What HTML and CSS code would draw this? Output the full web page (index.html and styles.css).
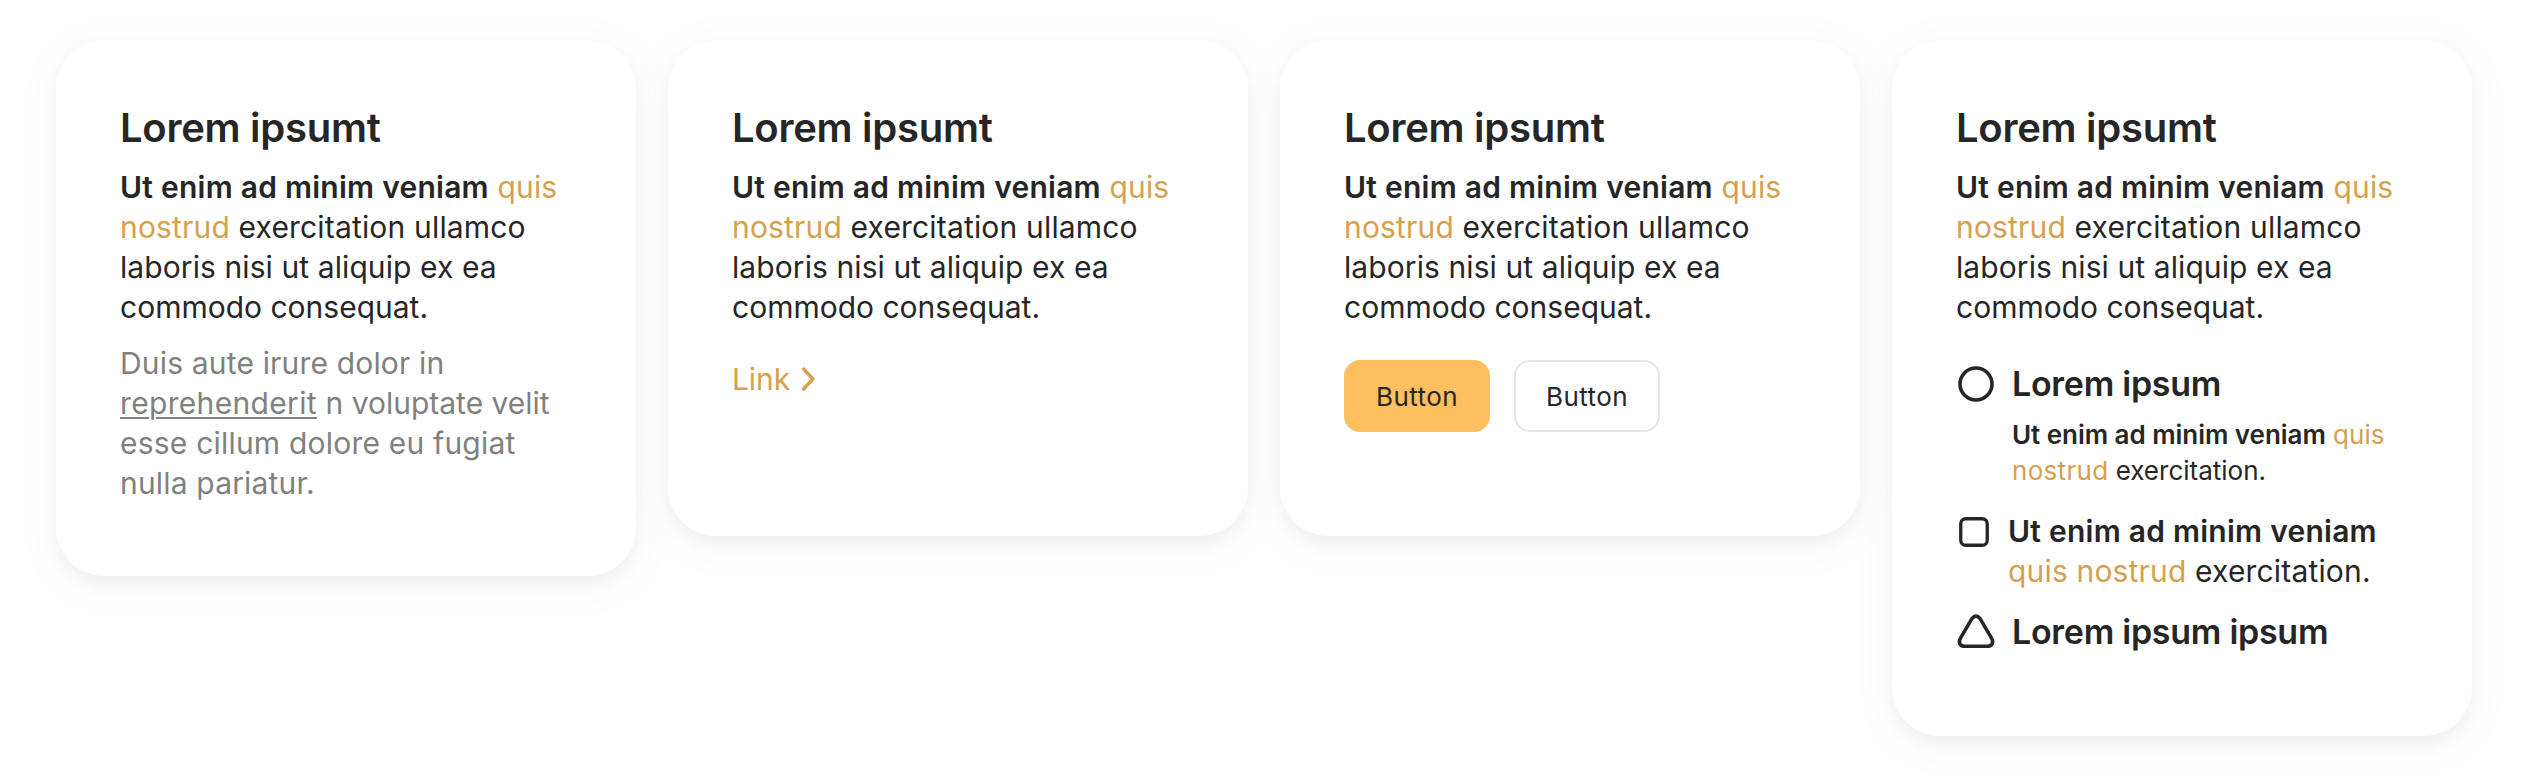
FILE: index.html
```html
<!DOCTYPE html>
<html lang="en">
<head>
<meta charset="utf-8">
<title>Cards</title>
<link rel="stylesheet" href="styles.css">
</head>
<body>
<main class="cards">
  <section class="card card-tall">
    <h2 class="title">Lorem ipsumt</h2>
    <p class="text"><b>Ut enim ad minim veniam</b> <span class="accent">quis<br>nostrud</span> exercitation ullamco<br><span class="snug">laboris nisi ut aliquip ex ea</span><br><span class="even">commodo consequat.</span></p>
    <p class="text muted">Duis aute irure dolor in<br><u>reprehenderit</u> <span class="even">n voluptate velit</span><br><span class="loose">esse cillum dolore eu fugiat</span><br>nulla pariatur.</p>
  </section>
  <section class="card card-short">
    <h2 class="title">Lorem ipsumt</h2>
    <p class="text"><b>Ut enim ad minim veniam</b> <span class="accent">quis<br>nostrud</span> exercitation ullamco<br><span class="snug">laboris nisi ut aliquip ex ea</span><br><span class="even">commodo consequat.</span></p>
    <a class="link">Link<svg class="chevron" width="16" height="28" viewBox="0 0 16 28"><path d="M3.500 4l9.500 10L3.500 24"/></svg></a>
  </section>
  <section class="card card-short">
    <h2 class="title">Lorem ipsumt</h2>
    <p class="text"><b>Ut enim ad minim veniam</b> <span class="accent">quis<br>nostrud</span> exercitation ullamco<br><span class="snug">laboris nisi ut aliquip ex ea</span><br><span class="even">commodo consequat.</span></p>
    <div class="buttons"><button class="btn btn-primary">Button</button><button class="btn">Button</button></div>
  </section>
  <section class="card card-long">
    <h2 class="title">Lorem ipsumt</h2>
    <p class="text"><b>Ut enim ad minim veniam</b> <span class="accent">quis<br>nostrud</span> exercitation ullamco<br><span class="snug">laboris nisi ut aliquip ex ea</span><br><span class="even">commodo consequat.</span></p>
    <ul class="list">
      <li class="item item-circle">
        <svg class="icon" width="40" height="40" viewBox="0 0 40 40"><circle cx="20" cy="20" r="16"/></svg>
        <div><h3 class="subtitle">Lorem ipsum</h3><p class="small"><b>Ut enim ad minim veniam</b> <span class="accent">quis<br><span class="wide">nostrud</span></span> exercitation.</p></div>
      </li>
      <li class="item item-square">
        <svg class="icon icon-thin" width="36" height="40" viewBox="0 0 36 40"><rect x="4.750" y="7.750" width="26.500" height="26.500" rx="5"/></svg>
        <p class="text"><b>Ut enim ad minim veniam</b><br><span class="accent">quis nostrud</span> exercitation.</p>
      </li>
      <li class="item item-triangle">
        <svg class="icon" width="40" height="40" viewBox="0 0 40 40"><path d="M15.900 6.700Q20 1.500 24.100 6.700L35.500 26.200C38 30.500 36 34.300 31.500 34.300H8.500C4 34.300 2 30.500 4.500 26.200Z"/></svg>
        <h3 class="subtitle">Lorem ipsum ipsum</h3>
      </li>
    </ul>
  </section>
</main>
</body>
</html>
```
FILE: styles.css
```css
* { box-sizing: border-box; }
body { margin: 0; background: #fff; font-family: Inter, "Liberation Sans", sans-serif; color: #262626; }
h2, h3, p, ul { margin: 0; padding: 0; }
b { font-weight: 600; }
.cards { display: flex; align-items: flex-start; gap: 32px; padding: 40px 56px; }
.card { width: 580px; padding: 64px; border-radius: 48px; background: #fff; box-shadow: 0 8px 16px rgba(0, 0, 0, .03), 0 8px 48px rgba(0, 0, 0, .05); white-space: nowrap; }
.card-tall { height: 536px; }
.card-short { height: 496px; }
.card-long { height: 696px; }
.title { font-size: 40px; line-height: 48px; font-weight: 600; letter-spacing: -.27px; margin-bottom: 15px; }
.text { font-size: 30px; line-height: 40px; letter-spacing: .17px; }
.text b { letter-spacing: .25px; }
.text u { letter-spacing: .33px; text-underline-offset: 3px; text-decoration-thickness: 2px; }
.even { letter-spacing: 0; }
.snug { letter-spacing: .09px; }
.loose { letter-spacing: .21px; }
.wide { letter-spacing: .3px; }
.accent { color: #d6a04f; }
.muted { margin-top: 16px; color: #808080; }
.link { display: inline-flex; align-items: center; gap: 10px; margin-top: 32px; font-size: 30px; line-height: 40px; letter-spacing: -.1px; color: #d6a04f; }
.chevron { fill: none; stroke: currentColor; stroke-width: 3.4; stroke-linecap: round; stroke-linejoin: round; }
.buttons { display: flex; gap: 24px; margin-top: 33px; }
.btn { width: 146px; height: 72px; border: 2px solid #e5e5e5; border-radius: 16px; background: #fff; color: #262626; font: 400 26px Inter, sans-serif; letter-spacing: .4px; padding: 0; }
.btn-primary { background: #ffbf5f; border-color: #ffbf5f; }
.list { list-style: none; margin-top: 37px; }
.item { display: flex; align-items: flex-start; gap: 16px; }
.icon { flex: none; fill: none; stroke: #262626; stroke-width: 3.6; stroke-linejoin: round; }
.icon-thin { stroke-width: 3.3; }
.subtitle { font-size: 34px; line-height: 40px; font-weight: 600; letter-spacing: -.28px; }
.small { font-size: 26px; line-height: 36px; margin-top: 13px; }
.small b { letter-spacing: -.04px; }
.item-square { margin-top: 22px; }
.item-triangle { margin-top: 21px; }
```
